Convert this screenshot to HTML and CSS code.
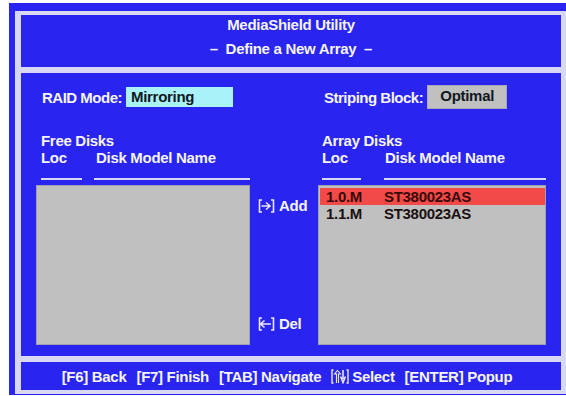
FILE: index.html
```html
<!DOCTYPE html>
<html lang="en">
<head>
  <meta charset="UTF-8" />
  <title>MediaShield Utility</title>
  <link rel="stylesheet" href="styles.css">
</head>
<body>
  <div class="screen">
    <div class="frame">
      <div class="panel header">
        <div>MediaShield Utility</div>
        <div>&ndash;&nbsp; Define a New Array &nbsp;&ndash;</div>
      </div>

      <div class="panel main">
        <div class="column">
          <div class="field">
            <span class="label">RAID Mode:</span>
            <span class="value mode">Mirroring</span>
          </div>
          <div class="list-title">Free Disks</div>
          <div class="cols">
            <span class="loc">Loc</span>
            <span class="name">Disk Model Name</span>
          </div>
          <div class="rules">
            <span class="rule loc-rule"></span>
            <span class="rule name-rule"></span>
          </div>
          <div class="list"></div>
        </div>

        <div class="actions">
          <div class="action">
            <svg width="17" height="14" viewBox="0 0 17 14">
              <path d="M4 1 H1.5 V13 H4 M13 1 H15.5 V13 H13 M3.5 7 H12 M8 3.5 L12 7 L8 10.5" fill="none" stroke="#e8e8ff" stroke-width="1.6"/>
            </svg>
            <span>Add</span>
          </div>
          <div class="action">
            <svg width="17" height="14" viewBox="0 0 17 14">
              <path d="M4 1 H1.5 V13 H4 M13 1 H15.5 V13 H13 M2.5 7 H13 M6.5 3.5 L2.5 7 L6.5 10.5" fill="none" stroke="#e8e8ff" stroke-width="1.6"/>
            </svg>
            <span>Del</span>
          </div>
        </div>

        <div class="column right">
          <div class="field">
            <span class="label">Striping Block:</span>
            <span class="value block">Optimal</span>
          </div>
          <div class="list-title">Array Disks</div>
          <div class="cols">
            <span class="loc">Loc</span>
            <span class="name">Disk Model Name</span>
          </div>
          <div class="rules">
            <span class="rule loc-rule"></span>
            <span class="rule name-rule"></span>
          </div>
          <div class="list">
            <div class="row selected"><span class="loc">1.0.M</span><span>ST380023AS</span></div>
            <div class="row"><span class="loc">1.1.M</span><span>ST380023AS</span></div>
          </div>
        </div>
      </div>

      <div class="panel footer">
        <span>[F6] Back</span>
        <span>[F7] Finish</span>
        <span>[TAB] Navigate</span>
        <span class="keys">
          <svg width="18" height="15" viewBox="0 0 18 15">
            <path d="M2.5 1 H1 V14 H2.5 M15.5 1 H17 V14 H15.5" fill="none" stroke="#e8e8ff" stroke-width="1.4"/>
            <path d="M5.5 14 V5 H3.5 L6.5 1.5 L9.5 5 H7.5 V14" fill="none" stroke="#e8e8ff" stroke-width="1.1"/>
            <path d="M12 1 V10 M9.6 7.5 L12 13.5 L14.4 7.5" fill="none" stroke="#e8e8ff" stroke-width="1.6"/>
          </svg>
          <span>Select</span>
        </span>
        <span>[ENTER] Popup</span>
      </div>
    </div>
  </div>
</body>
</html>
```

FILE: styles.css
```css
:root {
  --blue: #2a24f0;
  --lavender: #d8d8f4;
  --text: #f4f4ff;
  --gray: #c0c0c0;
  --cyan: #aaf2fa;
  --red: #f24a48;
}

body {
  margin: 0;
  background: #ffffff;
  font-family: "Liberation Sans", Arial, sans-serif;
  font-weight: bold;
  font-size: 15px;
  letter-spacing: -0.3px;
  color: var(--text);
  overflow: hidden;
  white-space: nowrap;
}

.screen {
  margin: 3px 0 0 9px;
  padding: 8px 0 1px 6px;
  background: var(--blue);
}

.frame {
  background: var(--lavender);
  padding: 4px 5px 4px 6px;
  display: flex;
  flex-direction: column;
  gap: 6px;
}

.panel {
  background: var(--blue);
}

.header {
  height: 52px;
  box-sizing: border-box;
  padding-top: 1px;
  display: flex;
  flex-direction: column;
  align-items: center;
  gap: 6px;
  line-height: 18px;
}

.main {
  height: 283px;
  box-sizing: border-box;
  padding: 12px 15px 11px 15px;
  display: grid;
  grid-template-columns: 214px 68px 228px;
}

.column {
  display: flex;
  flex-direction: column;
}

.field {
  display: flex;
  align-items: center;
  height: 24px;
  padding-left: 6px;
}

.label {
  margin-right: 4px;
  letter-spacing: -0.5px;
}

.right .label {
  margin-right: 4px;
  letter-spacing: -0.5px;
}

.value {
  color: #101820;
  box-sizing: border-box;
}

.mode {
  width: 107px;
  height: 20px;
  line-height: 20px;
  background: var(--cyan);
  padding-left: 5px;
}

.block {
  width: 80px;
  height: 24px;
  line-height: 20px;
  background: var(--gray);
  border: 1px solid #a8a8b8;
  text-align: center;
}

.list-title {
  margin-top: 23px;
  padding-left: 5px;
  line-height: 17px;
}

.right .list-title,
.right .cols,
.right .rules {
  padding-left: 4px;
}

.cols {
  display: flex;
  padding-left: 5px;
  line-height: 17px;
}

.cols .loc {
  width: 55px;
}

.right .cols .loc {
  width: 63px;
}

.rules {
  display: flex;
  padding-left: 5px;
  margin-top: 12px;
  gap: 12px;
}

.rule {
  height: 2px;
  background: var(--lavender);
}

.loc-rule {
  width: 42px;
}

.right .loc-rule {
  width: 39px;
  margin-right: 11px;
}

.name-rule {
  width: 158px;
}

.right .name-rule {
  width: 163px;
}

.list {
  margin-top: 5px;
  flex: 1;
  background: var(--gray);
  border: 1px solid #a0a0b0;
  padding: 2px 0 0 1px;
  color: #1a1010;
}

.row {
  display: flex;
  height: 17px;
  line-height: 17px;
  padding-left: 6px;
}

.row .loc {
  width: 58px;
}

.row.selected {
  background: var(--red);
  color: #3a0808;
}

.actions {
  display: flex;
  flex-direction: column;
  justify-content: space-between;
  padding: 112px 0 13px 8px;
}

.action {
  display: flex;
  align-items: center;
  gap: 4px;
}

.footer {
  height: 28px;
  display: flex;
  align-items: center;
  justify-content: center;
  gap: 10px;
  padding-right: 8px;
}

.keys {
  display: flex;
  align-items: center;
  gap: 3px;
}
```
